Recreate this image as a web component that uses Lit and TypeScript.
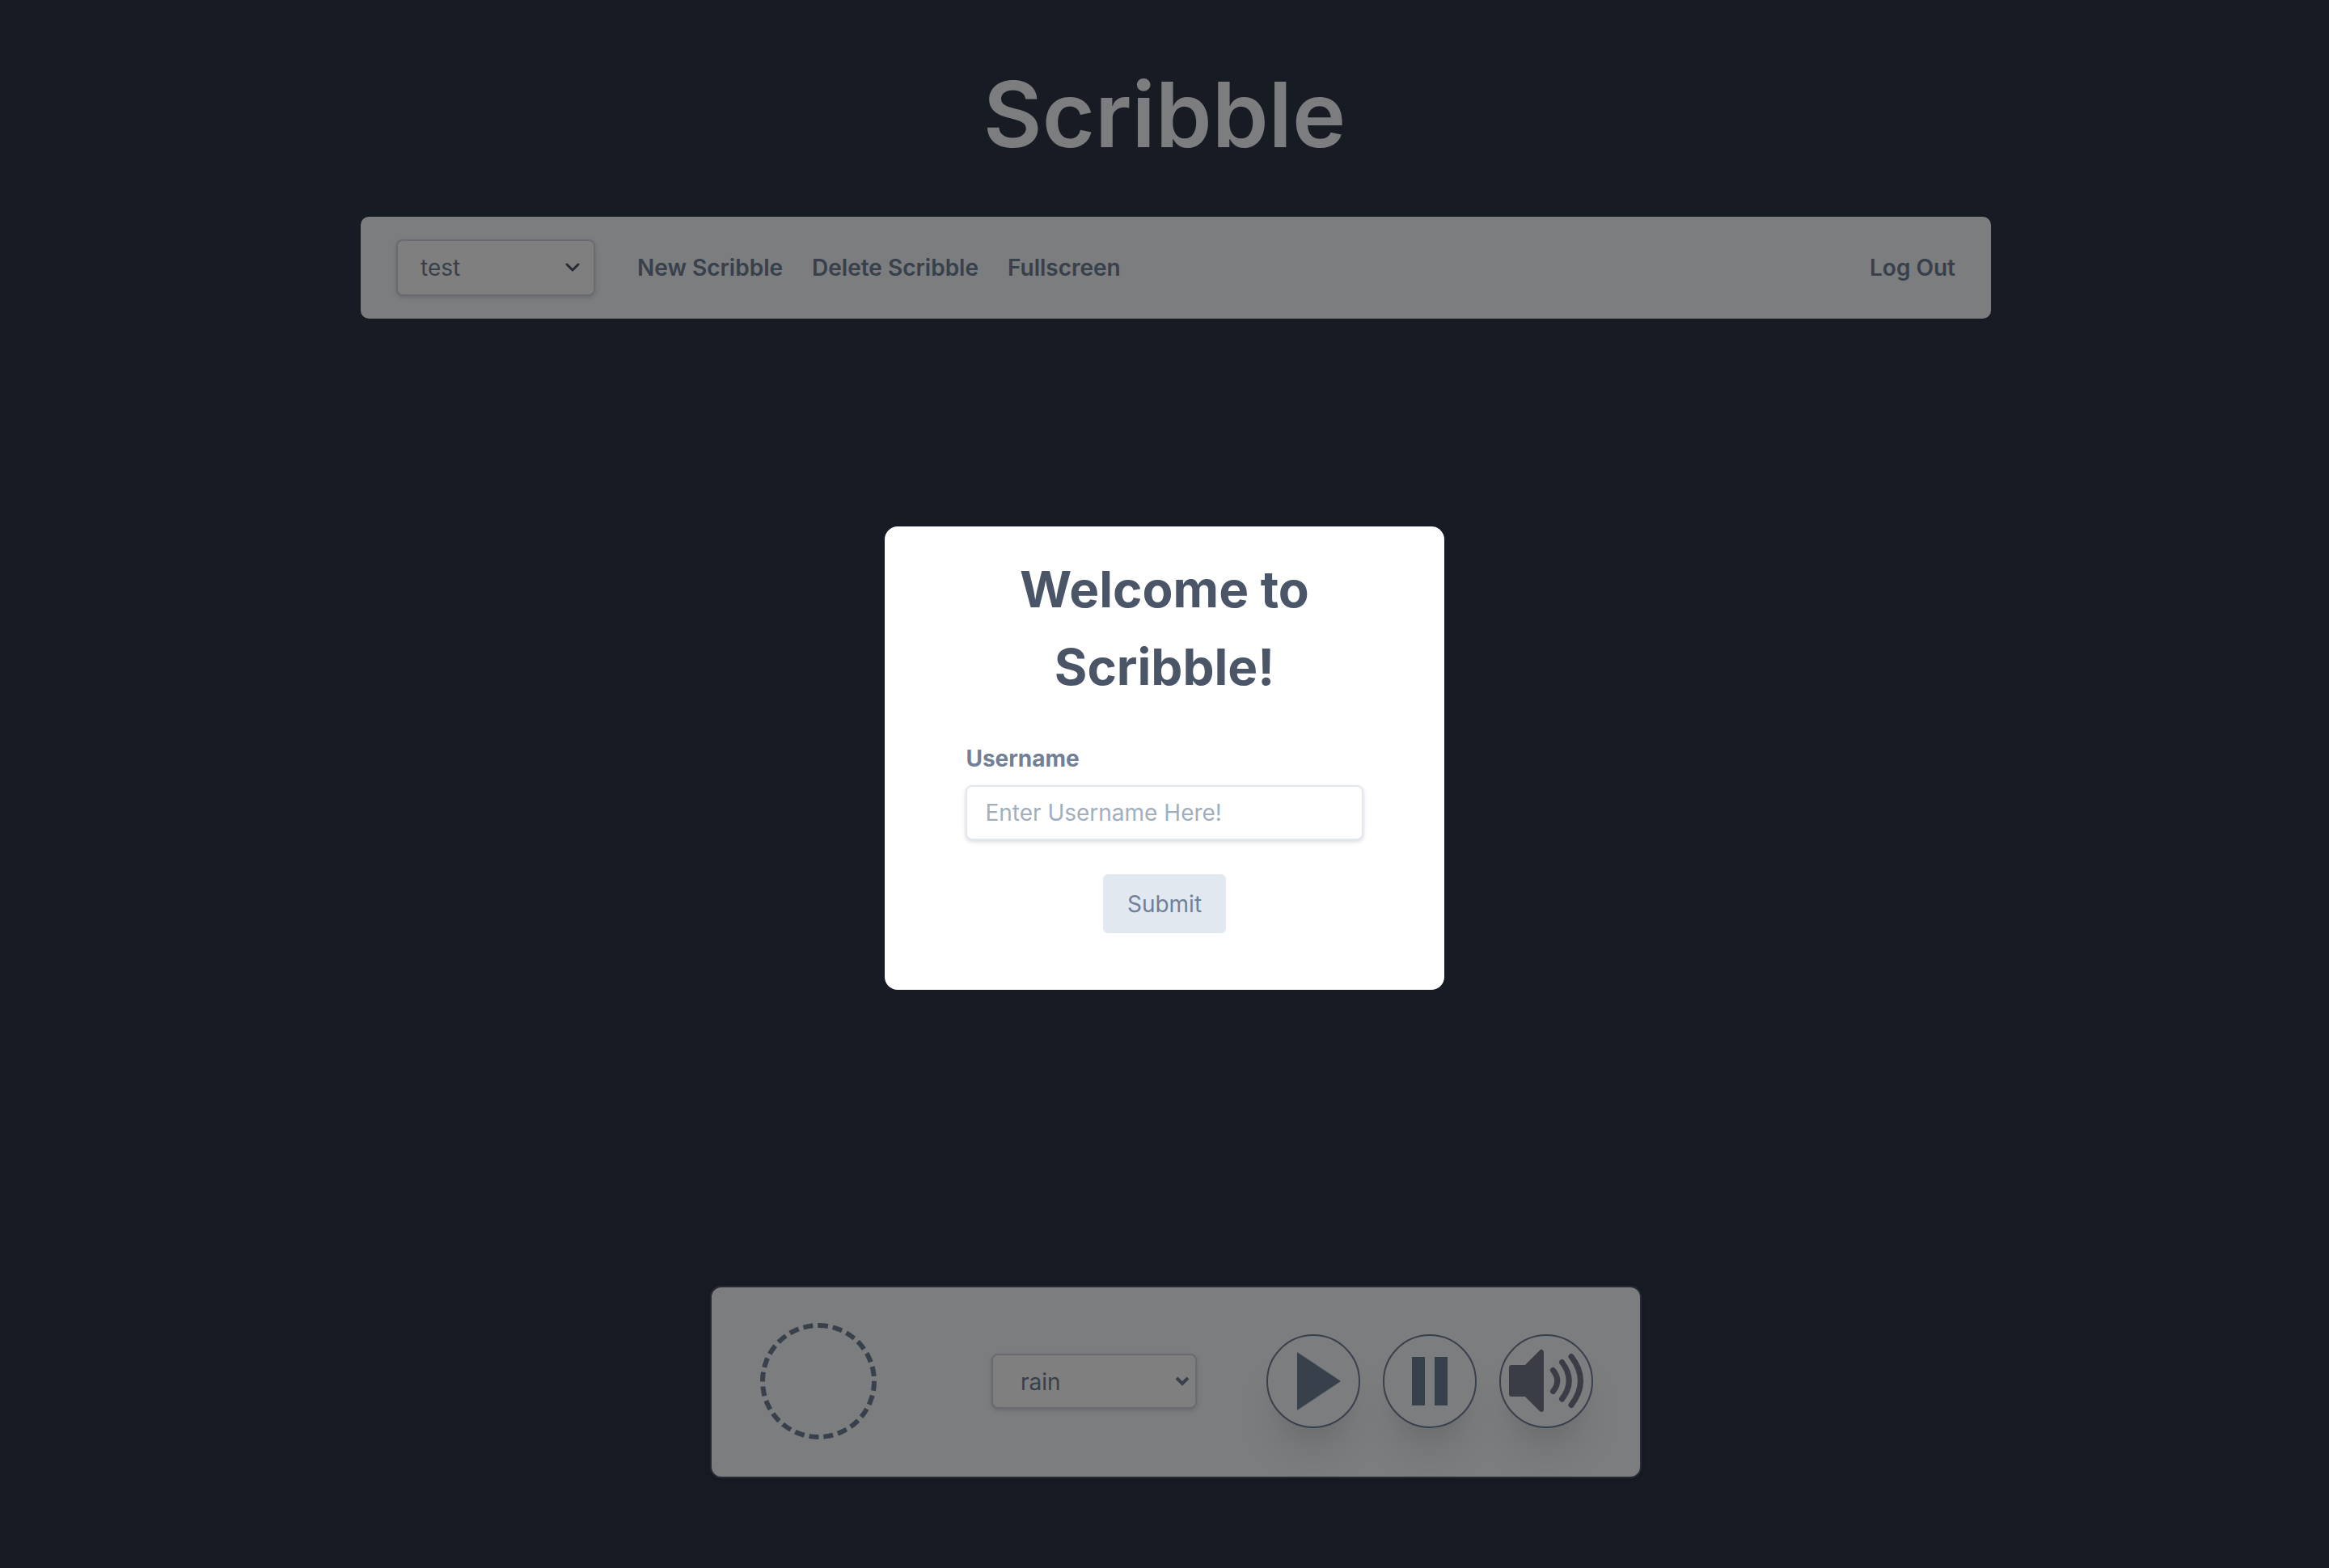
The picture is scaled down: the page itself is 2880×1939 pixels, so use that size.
import { LitElement, html, css, svg } from "lit";
import { customElement, property, state } from "lit/decorators.js";

const playIcon = svg`<path d="M38 22 92 58 38 94Z" fill="currentColor"/>`;

const pauseIcon = svg`<path d="M36 28h16v60H36zM64 28h16v60H64z" fill="currentColor"/>`;

const volumeIcon = svg`
  <path
    d="M15 41h18L52 22v71L33 74H15z"
    fill="currentColor" stroke="currentColor" stroke-width="6" stroke-linejoin="round"/>
  <path
    d="M66.500 44.500Q77 57.500 66.500 70.500M77.500 34.500Q95 57.500 77.500 80M89 27.500Q112 57.500 89 87.500"
    fill="none" stroke="currentColor" stroke-width="7" stroke-linecap="round"/>`;

const sharedStyles = css`
  *,
  *::before,
  *::after {
    box-sizing: border-box;
  }
  button,
  input,
  select {
    font: inherit;
    color: inherit;
    margin: 0;
  }
  button {
    background: none;
    border: 0;
    padding: 0;
    cursor: pointer;
  }
`;

@customElement("scribble-select")
class ScribbleSelect extends LitElement {
  @property() label = "";
  @property({ type: Array }) options: string[] = [];
  @property({ reflect: true }) variant: "notes" | "sounds" = "notes";

  static styles = [
    sharedStyles,
    css`
      :host {
        display: grid;
        align-items: center;
      }
      .select,
      .chevron {
        grid-area: 1 / 1;
      }
      .select {
        appearance: none;
        width: 100%;
        height: 70px;
        padding: 0 28px;
        background: #fff;
        border: 2px solid #d2d6e0;
        border-radius: 8px;
        box-shadow: 0 2px 6px rgba(0, 0, 0, 0.1), 0 2px 4px rgba(0, 0, 0, 0.06);
      }
      .chevron {
        justify-self: end;
        width: 20px;
        height: 14px;
        margin-right: 18px;
        fill: none;
        stroke: #4a5568;
        stroke-width: 3;
        stroke-linecap: round;
        stroke-linejoin: round;
        pointer-events: none;
      }
      :host([variant="sounds"]) .select {
        height: 68px;
        padding: 2px 34px 0;
      }
      :host([variant="sounds"]) .chevron {
        margin-right: 8px;
        stroke: #718096;
        stroke-width: 4;
        stroke-linecap: butt;
        stroke-linejoin: miter;
      }
    `,
  ];

  render() {
    return html`
      <select class="select" aria-label=${this.label}>
        ${this.options.map((o) => html`<option>${o}</option>`)}
      </select>
      <svg class="chevron" viewBox="0 0 20 14" aria-hidden="true">
        <path d="M3 3l7 7 7-7" />
      </svg>
    `;
  }
}

@customElement("scribble-toolbar")
class ScribbleToolbar extends LitElement {
  static styles = [
    sharedStyles,
    css`
      :host {
        display: block;
      }
      .bar {
        display: flex;
        align-items: center;
        gap: 36px;
        padding: 28px 44px;
        background: #f7fafc;
        border-radius: 10px;
        color: #718096;
      }
      .notes {
        width: 246px;
        margin-right: 16px;
      }
      .action {
        font-weight: 600;
      }
      .logout {
        margin-left: auto;
      }
    `,
  ];

  render() {
    return html`
      <nav class="bar">
        <scribble-select class="notes" label="Scribble" .options=${["test"]}></scribble-select>
        <button class="action" type="button">New Scribble</button>
        <button class="action" type="button">Delete Scribble</button>
        <button class="action" type="button">Fullscreen</button>
        <button class="action logout" type="button">Log Out</button>
      </nav>
    `;
  }
}

@customElement("sound-player")
class SoundPlayer extends LitElement {
  static styles = [
    sharedStyles,
    css`
      :host {
        display: block;
      }
      .player {
        display: flex;
        align-items: center;
        padding: 44px 58px 46px 60px;
        background: #f7fafc;
        border: 2px solid #4a5568;
        border-radius: 14px;
        box-shadow: 0 2px 6px rgba(0, 0, 0, 0.1);
        color: #718096;
      }
      .ring {
        width: 144px;
        height: 144px;
        border: 6px dashed #718096;
        border-radius: 50%;
      }
      .middle {
        flex: 1;
        display: flex;
        padding-left: 56px;
      }
      .sounds {
        width: 254px;
        margin: 0 auto;
      }
      .controls {
        display: flex;
        gap: 28px;
      }
      .control {
        width: 116px;
        height: 116px;
        border: 2px solid #718096;
        border-radius: 50%;
        box-shadow: 0 40px 50px -10px rgba(0, 0, 0, 0.1), 0 20px 20px -10px rgba(0, 0, 0, 0.04);
      }
      .icon {
        display: block;
        width: 112px;
        height: 112px;
      }
      .volume {
        color: #757b8d;
      }
    `,
  ];

  render() {
    const controls = [
      { name: "Play", key: "play", icon: playIcon },
      { name: "Pause", key: "pause", icon: pauseIcon },
      { name: "Volume", key: "volume", icon: volumeIcon },
    ];
    return html`
      <section class="player" aria-label="Sounds">
        <div class="ring"></div>
        <div class="middle">
          <scribble-select class="sounds" variant="sounds" label="Sound" .options=${["rain"]}></scribble-select>
        </div>
        <div class="controls">
          ${controls.map(
            (c) => html`
              <button class="control ${c.key}" type="button" aria-label=${c.name}>
                <svg class="icon" viewBox="2 2 112 112" aria-hidden="true">${c.icon}</svg>
              </button>
            `
          )}
        </div>
      </section>
    `;
  }
}

@customElement("welcome-dialog")
class WelcomeDialog extends LitElement {
  @state() private username = "";

  static styles = [
    sharedStyles,
    css`
      :host {
        display: block;
      }
      .dialog {
        display: flex;
        flex-direction: column;
        padding: 30px 100px 70px;
        background: #fff;
        border-radius: 16px;
        color: #718096;
      }
      .heading {
        margin: 0 0 44px;
        padding: 0 40px;
        font-size: 62px;
        line-height: 96px;
        font-weight: 700;
        text-align: center;
        color: #4a5568;
      }
      .label {
        margin-bottom: 12px;
        line-height: 42px;
        font-weight: 700;
      }
      .field {
        width: 100%;
        height: 68px;
        padding: 0 22px;
        background: #fff;
        border: 2px solid #e2e8f0;
        border-radius: 8px;
        box-shadow: 0 2px 6px rgba(0, 0, 0, 0.1), 0 2px 4px rgba(0, 0, 0, 0.06);
      }
      .field::placeholder {
        color: #a0aec0;
        opacity: 1;
      }
      .submit {
        align-self: center;
        height: 73px;
        margin-top: 42px;
        padding: 0 30px;
        background: #e2e8f0;
        border-radius: 6px;
      }
    `,
  ];

  private onInput(e: Event) {
    this.username = (e.target as HTMLInputElement).value;
  }

  render() {
    return html`
      <form class="dialog" role="dialog" aria-labelledby="heading" @submit=${(e: Event) => e.preventDefault()}>
        <h2 class="heading" id="heading">Welcome to Scribble!</h2>
        <label class="label" for="username">Username</label>
        <input
          class="field"
          id="username"
          type="text"
          placeholder="Enter Username Here!"
          .value=${this.username}
          @input=${this.onInput}
        />
        <button class="submit" type="submit">Submit</button>
      </form>
    `;
  }
}

@customElement("app-root")
class AppRoot extends LitElement {
  static styles = [
    sharedStyles,
    css`
      :host {
        display: grid;
        min-height: 100vh;
        background: #2d3748;
        font-family: Inter, "Liberation Sans", sans-serif;
        font-size: 28px;
        line-height: 42px;
      }
      .page,
      .overlay {
        grid-area: 1 / 1;
      }
      .page {
        display: flex;
        flex-direction: column;
        align-items: center;
        padding: 57px 0 111px;
      }
      .title {
        margin: 0 0 43px;
        font-size: 112px;
        line-height: 168px;
        font-weight: 600;
        color: #f7fafc;
      }
      .toolbar {
        width: 70%;
        margin-left: 28px;
      }
      .player {
        width: 40%;
        margin-top: auto;
        margin-left: 28px;
      }
      .overlay {
        z-index: 1;
        display: flex;
        align-items: center;
        justify-content: center;
        padding-bottom: 64px;
        background: rgba(0, 0, 0, 0.5);
      }
      .welcome {
        width: 24%;
      }
    `,
  ];

  render() {
    return html`
      <main class="page">
        <h1 class="title">Scribble</h1>
        <scribble-toolbar class="toolbar"></scribble-toolbar>
        <sound-player class="player"></sound-player>
      </main>
      <div class="overlay">
        <welcome-dialog class="welcome"></welcome-dialog>
      </div>
    `;
  }
}
